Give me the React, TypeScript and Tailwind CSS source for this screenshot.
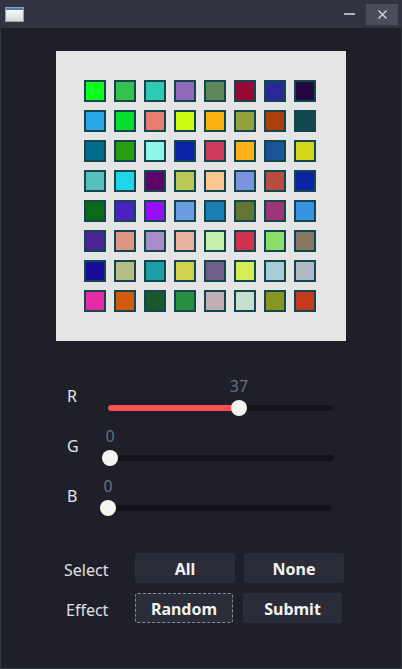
import React from "react"

const colors: string[] = [
  "#0dff1d", "#35c24a", "#2dcbb4", "#9069ba", "#5e8659", "#980837", "#2a2894", "#22083e",
  "#29a7ea", "#05de2a", "#e87c70", "#cdfb12", "#fbb112", "#95a23c", "#ad400a", "#10474d",
  "#016d8d", "#2a9d11", "#8df5e9", "#0d23a5", "#cf3a5a", "#fdb11a", "#1a5496", "#d3d41d",
  "#58bfbb", "#1fd5e8", "#5d046b", "#bbc857", "#fcc78f", "#7f92e0", "#b84b42", "#0b24a5",
  "#0a6a17", "#4a22c2", "#950ef6", "#6b9ee0", "#1a7eb6", "#607631", "#9d3576", "#3a92e4",
  "#4c2495", "#dd9482", "#aa8dc8", "#e8b29f", "#c5f0ac", "#cf324f", "#8adf69", "#877760",
  "#170c9a", "#b7bd85", "#1d9ea5", "#d2d24e", "#6f5e88", "#d7eb56", "#a9cdd7", "#b0b8c6",
  "#e82aa7", "#d25a0a", "#1b582d", "#269040", "#c0b0b5", "#c6dfd0", "#869620", "#c53a1d",
]

interface SliderRowProps {
  label: string
  value: number
  thumb: number // thumb centre, px from track start
  trackWidth: number
}

const SliderRow: React.FC<SliderRowProps> = ({ label, value, thumb, trackWidth }) => {
  return (
    <div className="flex h-[50px] items-start">
      <div className="w-[52px] pt-[6px] pl-[11px] text-[16px] leading-[20px] text-[#e4e4e4]">{label}</div>
      <div className="relative h-[50px]" style={{ width: trackWidth }}>
        <div
          className="absolute top-[-4px] -translate-x-1/2 text-[16px] leading-[20px] text-[#6c6f79]"
          style={{ left: thumb }}
        >
          {value}
        </div>
        <div className="absolute left-0 right-0 top-[25px] h-[6px] rounded-full bg-[#121219]" />
        {thumb > 8 && (
          <div className="absolute left-0 top-[25px] h-[6px] rounded-full bg-[#fb4f53]" style={{ width: thumb }} />
        )}
        <div
          className="absolute top-[20px] h-[16px] w-[16px] -translate-x-1/2 rounded-full bg-[#f5f5ef]"
          style={{ left: thumb }}
        />
      </div>
    </div>
  )
}

export default function App() {
  return (
    <div
      className="flex h-[669px] w-[402px] flex-col bg-[#1f1f29]"
      style={{ fontFamily: '"Noto Sans", "Open Sans", sans-serif' }}
    >
      {/* title bar */}
      <div className="flex h-[28px] shrink-0 items-center bg-[#30343f]">
        <div className="ml-[5px] h-[15px] w-[19px] border border-[#9aa0a8] bg-gradient-to-b from-[#ffffff] to-[#d8d8d8]">
          <div className="h-[2px] bg-[#4a78c0]" />
        </div>
        <div className="flex-1" />
        <div className="mr-[11px] h-[2px] w-[11px] bg-[#aeb0b4]" />
        <div className="mr-[4px] flex h-[21px] w-[32px] items-center justify-center bg-[#4a4e5a]">
          <svg width="9" height="9" viewBox="0 0 9 9">
            <path d="M0.5 0.5 L8.5 8.5 M8.5 0.5 L0.5 8.5" stroke="#d8d8d8" strokeWidth="1.3" />
          </svg>
        </div>
      </div>

      <div className="flex flex-1 flex-col border-x border-b border-[#34363f]">
        {/* colour grid */}
        <div className="mx-auto mt-[23px] h-[290px] w-[290px] bg-[#e5e5e5] pl-[28px] pt-[29px]">
          <div className="grid w-[232px] grid-cols-8 gap-[8px]">
            {colors.map((c, i) => (
              <div
                key={i}
                className="h-[22px] w-[22px] border-2 border-[#13474d]"
                style={{ backgroundColor: c }}
              />
            ))}
          </div>
        </div>

        {/* sliders */}
        <div className="mt-[39px] flex flex-col pl-[55px]">
          <SliderRow label="R" value={37} thumb={131} trackWidth={224} />
          <SliderRow label="G" value={0} thumb={2} trackWidth={226} />
          <SliderRow label="B" value={0} thumb={0} trackWidth={223} />
        </div>

        {/* buttons */}
        <div className="mt-[23px] flex flex-col gap-[10px] pl-[63px] text-[16px]">
          <div className="flex items-center">
            <div className="w-[71px] pt-[3px] text-[#e0e0e0]">Select</div>
            <div className="flex gap-[9px]">
              <button className="h-[30px] w-[100px] rounded-[3px] bg-[#2a2c37] pt-[2px] font-bold text-[#f2f2f2]">All</button>
              <button className="h-[30px] w-[100px] rounded-[3px] bg-[#2a2c37] pt-[2px] font-bold text-[#f2f2f2]">None</button>
            </div>
          </div>
          <div className="flex items-center">
            <div className="w-[71px] pl-[2px] pt-[3px] text-[#e0e0e0]">Effect</div>
            <div className="flex gap-[10px]">
              <button className="h-[30px] w-[98px] rounded-[3px] border border-dashed border-[#8a8c94] bg-[#2a2c37] pt-[2px] font-bold text-[#f2f2f2]">
                Random
              </button>
              <button className="h-[30px] w-[99px] rounded-[3px] bg-[#2a2c37] pt-[2px] font-bold text-[#f2f2f2]">Submit</button>
            </div>
          </div>
        </div>
      </div>
    </div>
  )
}
